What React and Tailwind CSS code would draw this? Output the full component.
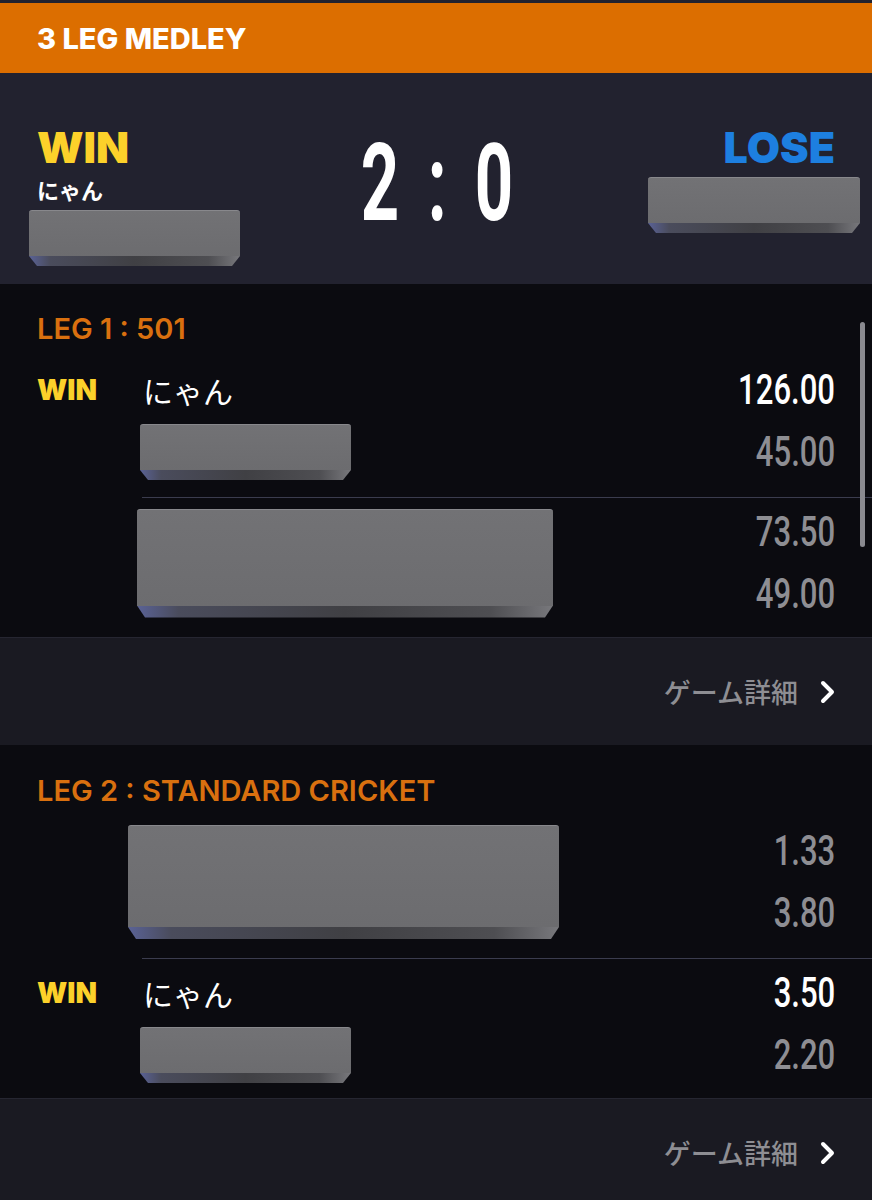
import React from "react";

const latin = "font-['Inter','Noto_Sans_CJK_JP',sans-serif]";
const jp = "font-['Noto_Sans_CJK_JP',sans-serif]";
const num = "font-['Roboto','Liberation_Sans',sans-serif]";

// 伏せ字ボックス (面 + 下の面取り)
function Box({ className, bevel = "h-[10px]" }) {
  return (
    <div className={`flex flex-col ${className}`}>
      <div className="flex-1 rounded-t-[3px] border-t border-[#88888c] bg-[linear-gradient(180deg,#727275,#6c6c6f)]" />
      <div
        className={`${bevel} bg-[linear-gradient(90deg,#5a6296_0%,#4a4c5c_10%,#404044_50%,#4e4e52_85%,#78787c_100%)] [clip-path:polygon(0_0,100%_0,calc(100%_-_8px)_100%,8px_100%)]`}
      />
    </div>
  );
}

function NumCell({ value, bright }) {
  return (
    <div className="h-[62px] flex items-center justify-end">
      <span
        className={`${num} inline-block origin-right scale-x-[0.74] text-[42px] leading-none font-medium ${
          bright ? "text-white" : "text-[#8e8e93]"
        }`}
      >
        {value}
      </span>
    </div>
  );
}

function WinnerBlock({ scores }) {
  return (
    <div className="flex pr-[37px]">
      <div className="w-[143px] pl-[37px]">
        <div className={`h-[62px] flex items-center ${latin} text-[28px] leading-none font-black text-[#fcd12a]`}>
          WIN
        </div>
      </div>
      <div className="flex-1">
        <div className={`h-[62px] flex items-center ${jp} text-[30px] leading-none text-white`}>にゃん</div>
        <div className="h-[62px] flex items-center">
          <Box className="w-[211px] h-[56px] -ml-[3px]" />
        </div>
      </div>
      <div className="flex flex-col">
        <NumCell value={scores[0]} bright />
        <NumCell value={scores[1]} />
      </div>
    </div>
  );
}

function LoserBlock({ scores, boxClass }) {
  return (
    <div className="flex pr-[37px]">
      <div className="w-[143px]" />
      <div className="flex-1 flex items-center">
        <Box className={boxClass} bevel="h-[12px]" />
      </div>
      <div className="flex flex-col">
        <NumCell value={scores[0]} />
        <NumCell value={scores[1]} />
      </div>
    </div>
  );
}

function Divider() {
  return <div className="ml-[142px] my-[14px] mb-[3px] h-px bg-[#3b3c4e]" />;
}

function DetailLink() {
  return (
    <div className="h-[107px] bg-[#1a1a22] flex items-center justify-end pr-[37px]">
      <span className={`${jp} text-[27px] leading-none font-medium text-[#8e8e93]`}>ゲーム詳細</span>
      <svg className="ml-[22px]" width="15" height="24" viewBox="0 0 15 24" fill="none">
        <polyline points="3,3 12,12 3,21" stroke="#fff" strokeWidth="4" strokeLinecap="round" strokeLinejoin="round" />
      </svg>
    </div>
  );
}

export default function App() {
  return (
    <div className="w-[872px] min-h-[1200px] bg-[#1a1a22] overflow-hidden">
      {/* タイトル */}
      <div className="bg-[#22222f] pt-[3px]">
        <div className="h-[70px] bg-[#dc6e00] flex items-center pl-[37px]">
          <h1 className={`${latin} text-[29px] leading-none font-extrabold text-white`}>3 LEG MEDLEY</h1>
        </div>
      </div>

      {/* 結果 */}
      <section className="h-[211px] bg-[#22222f] flex pl-[29px] pr-[12px]">
        <div className="w-[211px] pt-[53px] flex flex-col">
          <div className={`${latin} pl-[8px] text-[43px] leading-none font-black text-[#fcd12a]`}>WIN</div>
          <div className={`${jp} pl-[8px] mt-[9px] text-[22px] leading-none font-bold text-white`}>にゃん</div>
          <Box className="mt-[10px] h-[56px] w-[211px]" />
        </div>
        <div className="flex-1 flex justify-center pr-[14px] pt-[56px]">
          <div className={`${num} flex gap-[17px] text-[108px] leading-none font-bold text-white`}>
            <span className="w-[40px] flex justify-center"><span className="inline-block scale-x-[0.62]">2</span></span>
            <span className="w-[40px] flex justify-center"><span className="inline-block scale-x-[0.62]">:</span></span>
            <span className="w-[40px] flex justify-center"><span className="inline-block scale-x-[0.62]">0</span></span>
          </div>
        </div>
        <div className="w-[212px] pt-[53px] flex flex-col items-end">
          <div className={`${latin} pr-[25px] text-[43px] leading-none font-black text-[#1d7fe0]`}>LOSE</div>
          <Box className="mt-[8px] h-[56px] w-[212px]" />
        </div>
      </section>

      {/* LEG 1 */}
      <section className="relative bg-[#0b0b10] pt-[30px] pb-[12px] border-b border-[#262631]">
        <h3 className={`${latin} pl-[37px] text-[29px] leading-none font-semibold text-[#d9700f]`}>LEG 1 : 501</h3>
        <div className="mt-[16px]">
          <WinnerBlock scores={["126.00", "45.00"]} />
        </div>
        <Divider />
        <LoserBlock scores={["73.50", "49.00"]} boxClass="w-[416px] h-[109px] -ml-[6px]" />
        <div className="absolute right-[7px] top-[38px] w-[5px] h-[225px] rounded-full bg-[#8a8a90]" />
      </section>
      <DetailLink />

      {/* LEG 2 */}
      <section className="bg-[#0b0b10] pt-[31px] pb-[12px] border-b border-[#262631]">
        <h3 className={`${latin} pl-[37px] text-[29px] leading-none font-semibold text-[#d9700f]`}>
          LEG 2 : STANDARD CRICKET
        </h3>
        <div className="mt-[15px]">
          <LoserBlock scores={["1.33", "3.80"]} boxClass="w-[431px] h-[114px] -ml-[15px]" />
        </div>
        <Divider />
        <WinnerBlock scores={["3.50", "2.20"]} />
      </section>
      <DetailLink />
    </div>
  );
}
